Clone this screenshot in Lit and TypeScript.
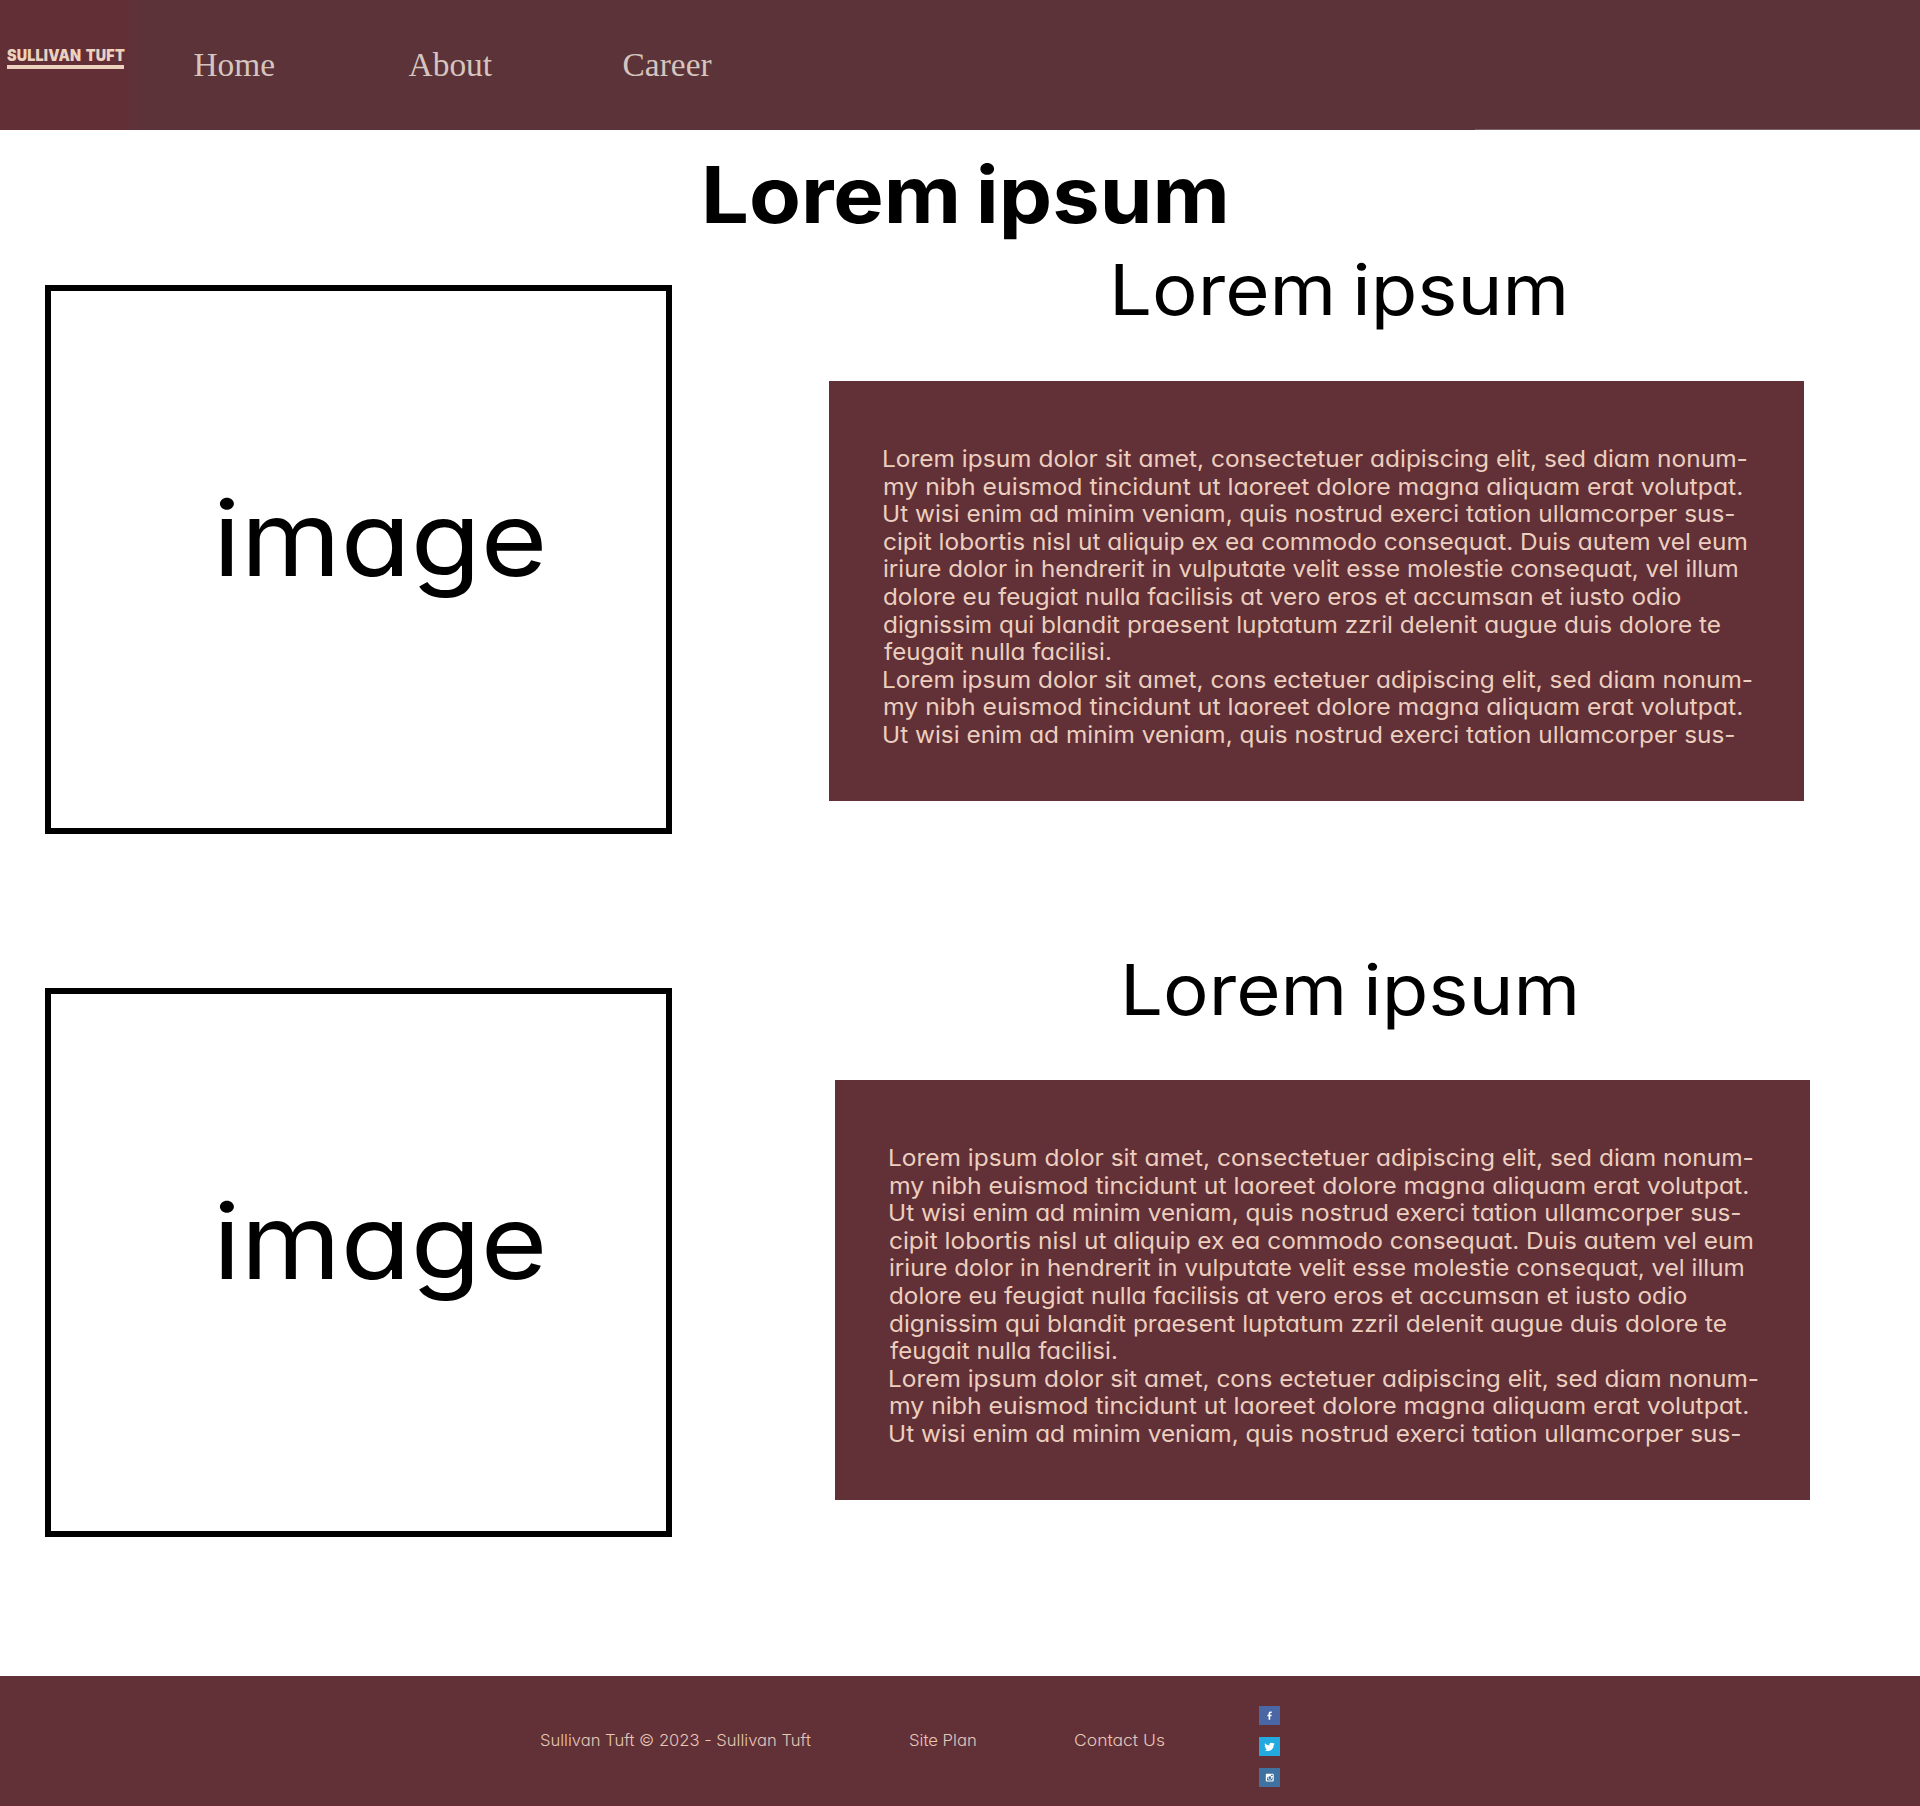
import { LitElement, html, css, svg } from "lit";
import { customElement, property } from "lit/decorators.js";

/** One line of text stretched horizontally so its ink spans `span` pixels. */
@customElement("fit-text")
class FitText extends LitElement {
  static styles = css`
    :host { display: block; white-space: pre; }
    .run { display: inline-block; transform-origin: 0 50%; }
  `;
  @property() text = "";
  @property({ type: Number }) span = 0;

  render() {
    return html`<span class="run">${this.text}</span>`;
  }

  updated() {
    const run = this.renderRoot.querySelector(".run") as HTMLElement;
    run.style.transform = "none";
    run.style.marginLeft = "0";
    const cs = getComputedStyle(run);
    // Measured at ten times the size, since canvas bounds come back rounded.
    const zoom = 10;
    const ctx = document.createElement("canvas").getContext("2d")!;
    ctx.font = `${cs.fontWeight} ${parseFloat(cs.fontSize) * zoom}px ${cs.fontFamily}`;
    const m = ctx.measureText(this.text);
    const left = -m.actualBoundingBoxLeft / zoom;
    const right = (m.width - m.actualBoundingBoxRight) / zoom;
    const spacing = parseFloat(cs.letterSpacing) || 0;
    const ink = run.getBoundingClientRect().width - left - right - spacing;
    const k = this.span / ink;
    run.style.transform = `scaleX(${k})`;
    run.style.marginLeft = `${-left * k}px`;
  }
}

const LINES: [string, number][] = [
  ["Lorem ipsum dolor sit amet, consectetuer adipiscing elit, sed diam nonum-", 862],
  ["my nibh euismod tincidunt ut laoreet dolore magna aliquam erat volutpat.", 856.6],
  ["Ut wisi enim ad minim veniam, quis nostrud exerci tation ullamcorper sus-", 849.7],
  ["cipit lobortis nisl ut aliquip ex ea commodo consequat. Duis autem vel eum", 861.8],
  ["iriure dolor in hendrerit in vulputate velit esse molestie consequat, vel illum", 852.5],
  ["dolore eu feugiat nulla facilisis at vero eros et accumsan et iusto odio", 796],
  ["dignissim qui blandit praesent luptatum zzril delenit augue duis dolore te", 835.6],
  ["feugait nulla facilisi.", 225.8],
  ["Lorem ipsum dolor sit amet, cons ectetuer adipiscing elit, sed diam nonum-", 867.3],
  ["my nibh euismod tincidunt ut laoreet dolore magna aliquam erat volutpat.", 856.6],
  ["Ut wisi enim ad minim veniam, quis nostrud exerci tation ullamcorper sus-", 849.7],
];

@customElement("app-root")
class AppRoot extends LitElement {
  static styles = css`
    :host { display: block; }
    .page {
      display: flex; flex-direction: column; width: 1920px; height: 1806px; overflow: hidden;
      background: #fff; color: #000; font-family: Inter, "Open Sans", sans-serif;
      font-feature-settings: "cv11" 1, "calt" 0;
    }
    header {
      display: flex; flex: none; height: 130px; box-sizing: border-box;
      background:
        linear-gradient(#7b6267, #7b6267) 1475px 129px / 445px 1px no-repeat,
        linear-gradient(90deg, #603138 0 138px, #5b3338 138px);
    }
    .logo { width: 117px; height: 130px; padding: 0 4px 0 7px; box-sizing: content-box; background: #622f37; color: #ecd1bf; }
    .name {
      padding-top: 46px; font-size: 15.6px; line-height: 19px; height: 19px; font-weight: 900;
      letter-spacing: 0.2px; word-spacing: 1.5px; border-bottom: 4px solid #ecd1bf;
    }
    nav {
      display: flex; gap: 133.5px; padding-left: 65.5px; padding-top: 46px;
      font: 33.4px/38px "Liberation Serif", serif; color: #d6c5be;
    }
    .career { margin-left: -3px; }
    h1, h2 { margin: 0; }
    h1 { flex: none; height: 121px; padding: 4px 0 0 706px; font-size: 78px; line-height: 121px; font-weight: 700; word-spacing: -5px; }
    section { display: flex; flex: none; height: 699px; align-items: flex-start; }
    figure {
      flex: none; box-sizing: border-box; width: 627px; height: 549px; margin: 30px 157px 0 45px;
      border: 6px solid #000; padding: 198px 0 0 167px; font-size: 103.5px; line-height: 100px;
    }
    .lower figure { margin-top: 34px; margin-right: 163px; }
    h2 {
      height: 126px; padding: 1px 0 0 285.5px; font-size: 70px; line-height: 68px; font-weight: 400;
      word-spacing: -5px; box-sizing: border-box;
    }
    .lower h2 { padding: 2px 0 0 291px; }
    .panel {
      box-sizing: border-box; width: 975px; height: 420px; padding: 65px 0 0 55.5px;
      background: #623037; color: #eccfbf; font-size: 23px; line-height: 27.6px;
    }
    footer {
      display: flex; flex: none; height: 130px; margin-top: auto; background: #623037; color: #e6c8b9;
      font-size: 16.5px; line-height: 20px; font-weight: 300;
    }
    .copy { width: 369px; padding: 54px 0 0 541px; }
    .plan { width: 165px; padding-top: 54px; }
    .contact { width: 184px; padding-top: 54px; }
    .social { display: flex; flex-direction: column; gap: 11.5px; padding-top: 30px; }
    .social svg { display: block; width: 21px; height: 19.3px; }
  `;

  private article(cls: string) {
    return html`<section class=${cls}>
      <figure><fit-text text="image" span="325"></fit-text></figure>
      <div>
        <h2><fit-text text="Lorem ipsum" span="449.5"></fit-text></h2>
        <div class="panel">
          ${LINES.map(([t, w]) => html`<fit-text .text=${t} .span=${w}></fit-text>`)}
        </div>
      </div>
    </section>`;
  }

  private icon(bg: string, mark: unknown) {
    return html`<svg viewBox="0 0 21 20" preserveAspectRatio="none">
      <rect width="21" height="20" fill=${bg}></rect>${mark}
    </svg>`;
  }

  render() {
    return html`<div class="page">
      <header>
        <div class="logo"><div class="name"><fit-text text="SULLIVAN TUFT" span="117"></fit-text></div></div>
        <nav><span>Home</span><span>About</span><span class="career">Career</span></nav>
      </header>
      <h1><fit-text text="Lorem ipsum" span="519"></fit-text></h1>
      ${this.article("upper")} ${this.article("lower")}
      <footer>
        <div class="copy"><fit-text text="Sullivan Tuft © 2023 - Sullivan Tuft" span="269.5"></fit-text></div>
        <div class="plan"><fit-text text="Site Plan" span="65.5"></fit-text></div>
        <div class="contact"><fit-text text="Contact Us" span="89"></fit-text></div>
        <div class="social">
          ${this.icon("#4a66a4", svg`<path fill="#fff" d="M9.6 14.2V10.6H8.4V9h1.2V7.8c0-1.4.8-2.1 2-2.1h1.1v1.5h-.8c-.5 0-.7.3-.7.7V9h1.5l-.2 1.6h-1.3v3.6z"/>`)}
          ${this.icon("#23a9e0", svg`<path fill="#fff" d="M5.5 13.6c1.1.1 2.1-.2 2.900-.8-1-.1-1.700-.7-1.900-1.500h.9C6.400 11 5.700 10.200 5.700 9.200l.9.200C5.700 8.800 5.500 7.600 6 6.600c1.100 1.300 2.600 2.100 4.300 2.200-.3-1.700.8-2.900 2.100-2.900.7 0 1.200.2 1.700.7l1.400-.5-.9 1.300 1.100-.3-1 1.200c.1 3.300-2.400 6.200-5.700 6.200-1.300 0-2.500-.3-3.500-.9z"/>`)}
          ${this.icon("#3f72a0", svg`<path fill="#fff" fill-rule="evenodd" d="M7.600 6h6.300c.5 0 .8.3.8.8v6.500c0 .5-.3.8-.8.800H7.600c-.5 0-.8-.3-.8-.8V6.800c0-.5.300-.8.800-.8zm4.500.9v1.500h1.600V6.900zM8 9.300v3.700h5.500V9.300h-.6a2.200 2.200 0 1 1-4.300 0zm2.800-.7a1.400 1.400 0 1 0 0 2.800 1.400 1.400 0 0 0 0-2.800z"/>`)}
        </div>
      </footer>
    </div>`;
  }
}
